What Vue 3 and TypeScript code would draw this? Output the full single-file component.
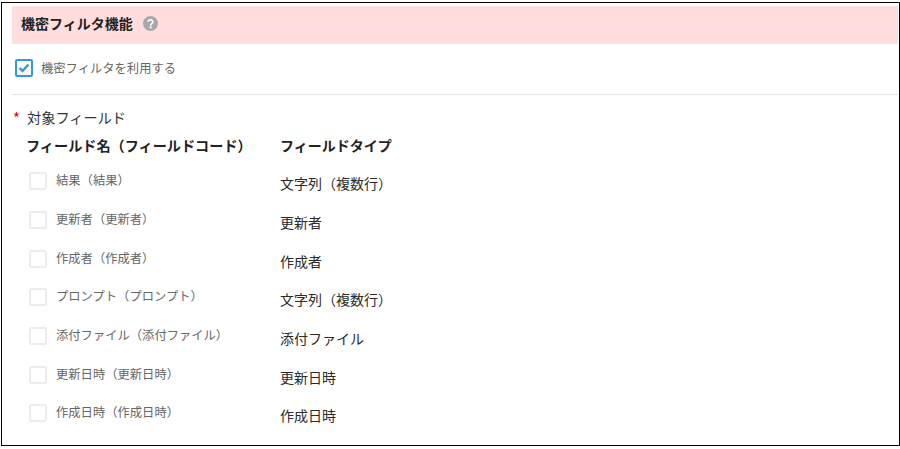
<script setup lang="ts">
const rows: { name: string; type: string }[] = [
  { name: '結果（結果）', type: '文字列（複数行）' },
  { name: '更新者（更新者）', type: '更新者' },
  { name: '作成者（作成者）', type: '作成者' },
  { name: 'プロンプト（プロンプト）', type: '文字列（複数行）' },
  { name: '添付ファイル（添付ファイル）', type: '添付ファイル' },
  { name: '更新日時（更新日時）', type: '更新日時' },
  { name: '作成日時（作成日時）', type: '作成日時' },
]
</script>

<template>
  <div class="frame">
    <div class="band">
      <span class="title">機密フィルタ機能</span>
      <svg class="help" width="15" height="15" viewBox="0 0 15 15">
        <circle cx="7.5" cy="7.5" r="7.5" fill="#a8a8a8" />
        <path d="M5.2 5.8a2.3 2.1 0 1 1 3.6 1.8c-.9.6-1.2.9-1.2 1.8" fill="none" stroke="#fff" stroke-width="1.7" />
        <rect x="6.6" y="10.3" width="2" height="2" fill="#fff" />
      </svg>
    </div>
    <div class="use-row">
      <span class="main-check">
        <svg width="12" height="10" viewBox="0 0 12 10">
          <path d="M1.5 5l3 3 6-6.5" fill="none" stroke="#3498db" stroke-width="2.4" />
        </svg>
      </span>
      <span class="use-label">機密フィルタを利用する</span>
    </div>
    <div class="fields">
      <div class="field-label"><span class="req">*</span><span class="field-text">対象フィールド</span></div>
      <div class="grid head">
        <div class="head-name">フィールド名（フィールドコード）</div>
        <div>フィールドタイプ</div>
      </div>
      <div v-for="r in rows" :key="r.name" class="grid row">
        <div class="name-cell">
          <span class="box"></span>
          <span class="name">{{ r.name }}</span>
        </div>
        <div class="type">{{ r.type }}</div>
      </div>
    </div>
  </div>
</template>

<style>
html, body { margin: 0; background: #fff; }
</style>

<style scoped>
.frame {
  box-sizing: border-box;
  width: 899px;
  height: 444px;
  margin: 2px 0 0 1px;
  border: 1px solid #000;
  padding: 3px 1px 0 10px;
  background: #fff;
  font-family: "Noto Sans CJK JP", "Noto Sans", sans-serif;
  color: #333;
  overflow: hidden;
}
.band {
  box-sizing: border-box;
  height: 38px;
  background: #ffdddd;
  display: flex;
  align-items: center;
  gap: 10px;
  padding: 0 0 4px 9px;
}
.title { font-size: 14px; font-weight: 700; color: #222; }
.use-row {
  height: 51px;
  box-sizing: border-box;
  border-bottom: 1px solid #e3e3e3;
  display: flex;
  align-items: center;
  padding: 0 0 2px 3px;
  gap: 8px;
}
.main-check {
  box-sizing: border-box;
  width: 18px;
  height: 18px;
  border: 2px solid #3498db;
  border-radius: 2px;
  display: flex;
  align-items: center;
  justify-content: center;
  flex: none;
}
.use-label { font-size: 12.3px; color: #666; }
.fields { padding-top: 12px; }
.field-label {
  display: flex;
  gap: 7px;
  font-size: 14px;
  line-height: 20px;
  color: #333;
  padding-left: 1px;
}
.field-text { font-size: 14.2px; }
.req { color: #e00; font-size: 15px; margin-top: 1px; }
.grid {
  display: grid;
  grid-template-columns: 253px 1fr;
  padding-left: 15px;
}
.head {
  margin-top: 7px;
  height: 20px;
  line-height: 20px;
  font-size: 14px;
  font-weight: 700;
  color: #222;
}
.head-name { font-size: 14.15px; margin-left: -1px; }
.row { height: 38.67px; align-items: center; }
.head + .row { margin-top: 9px; }
.name-cell {
  display: flex;
  align-items: center;
  gap: 9px;
  padding-left: 2px;
  margin-top: -4px;
}
.box {
  box-sizing: border-box;
  width: 18px;
  height: 18px;
  border: 2px solid #ececec;
  border-radius: 2px;
  flex: none;
}
.name { font-size: 12.3px; color: #666; margin-top: -2px; }
.type { font-size: 14px; color: #2a2a2a; }
</style>
